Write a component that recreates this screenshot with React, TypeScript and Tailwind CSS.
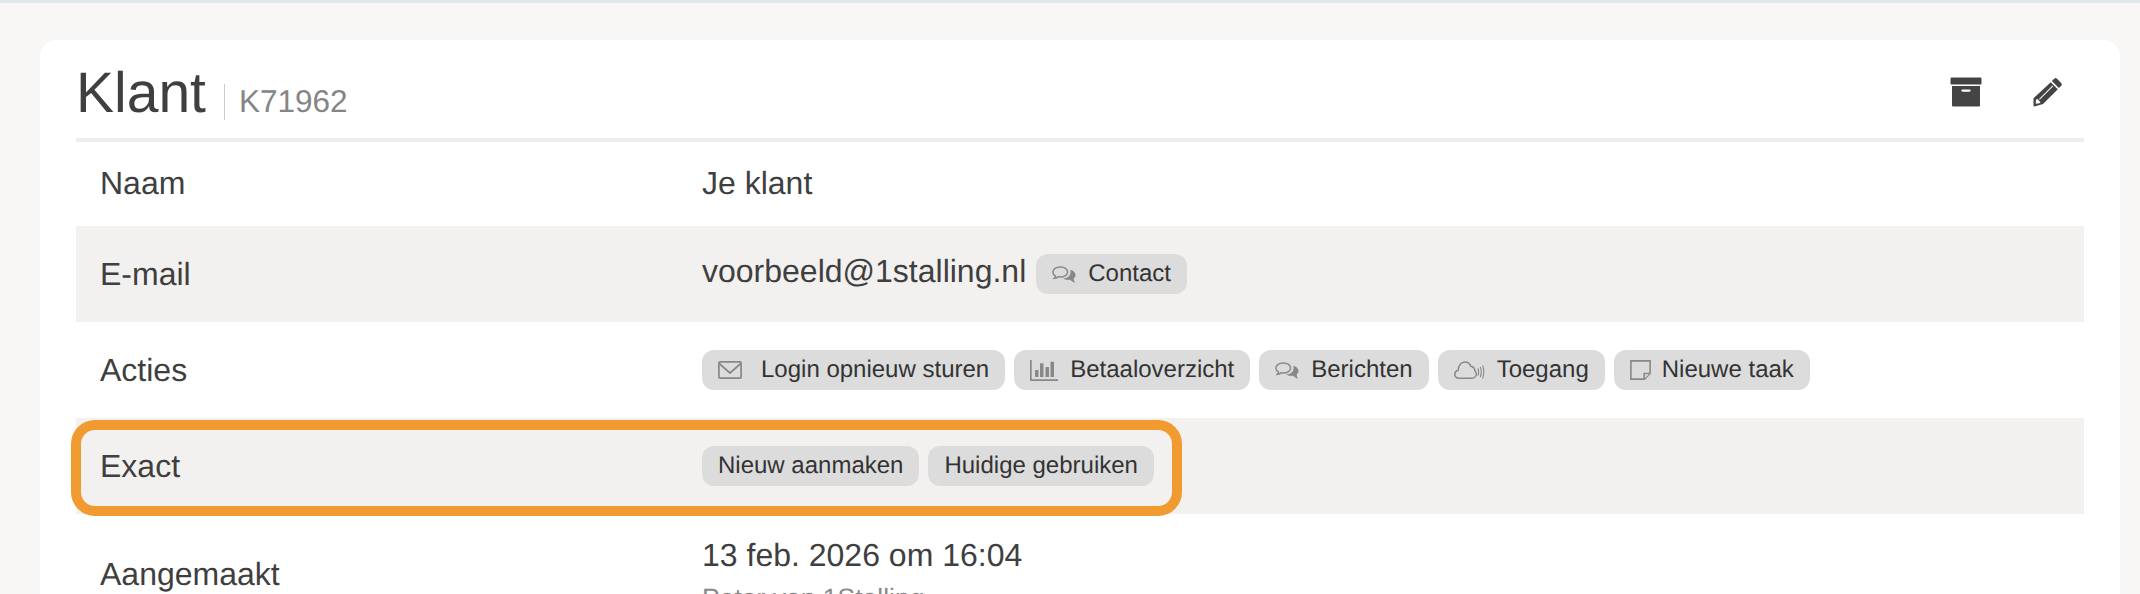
import type { ReactNode } from "react";

const ArchiveIcon = () => (
  <svg width="32" height="30" viewBox="0 0 32 30" fill="#444">
    <rect x="0.5" y="0.5" width="31" height="7" rx="1.2" />
    <path fillRule="evenodd" d="M2 9h28v19.5a1 1 0 0 1-1 1H3a1 1 0 0 1-1-1zM12.500 12.500a1 1 0 0 0 0 2.200h7a1 1 0 0 0 0-2.200z" />
  </svg>
);

const PencilIcon = () => (
  <svg width="30" height="30" viewBox="0 0 30 30" fill="#444">
    <path d="M21.200 1.800a2 2 0 0 1 2.800 0l4.200 4.200a2 2 0 0 1 0 2.800l-2.300 2.300-7-7z" />
    <path fillRule="evenodd" d="M17.800 5.200l7 7L10 27l-8.500 2.500a1 1 0 0 1-1-1v-7.300zM3 23l-.3 3.800 3.800-.6 1-1-3.400-3.400zM19.500 8.600L6 22.100l.7.700L20.200 9.300z" />
  </svg>
);

const CommentsIcon = () => (
  <svg width="24" height="17" viewBox="0 0 24 17" fill="none" stroke="#888" strokeWidth="1.500">
    <path d="M8.300.9C4.100.9.900 3.100.900 6c0 1.700 1 3.100 2.600 4.100-.1.800-.6 1.600-1.200 2.200 1.500-.1 2.800-.7 3.800-1.500.7.100 1.400.2 2.200.2 4.200 0 7.300-2.200 7.300-5S12.500.9 8.300.9z" />
    <path fill="#888" stroke="none" d="M18.200 3.800c3.200.8 5.300 2.700 5.300 5.100 0 1.400-.7 2.600-1.900 3.500.1 1.500.7 3 1.400 4.300-2-.5-3.600-1.600-4.800-2.900-.6.100-1.300.1-1.900.1-2.100 0-4-.5-5.300-1.400 4.900.2 8.900-3.300 7.200-8.700z" />
  </svg>
);

const EnvelopeIcon = () => (
  <svg width="24" height="18" viewBox="0 0 24 18" fill="none" stroke="#888" strokeWidth="1.700">
    <rect x="0.900" y="0.900" width="22.200" height="16.200" rx="1.200" />
    <path d="M1.200 2.500L12 12 22.800 2.500" />
  </svg>
);

const ChartIcon = () => (
  <svg width="28" height="21" viewBox="0 0 28 21" fill="#888">
    <path d="M0 0h1.700v19.300H28V21H0z" />
    <rect x="5" y="10" width="3.500" height="7" />
    <rect x="10" y="3.300" width="3.500" height="13.700" />
    <rect x="15.500" y="7" width="3.500" height="10" />
    <rect x="20.500" y="1.700" width="3.500" height="15.300" />
  </svg>
);

const CloudIcon = () => (
  <svg width="31" height="19" viewBox="0 0 31 19" fill="none" stroke="#888" strokeWidth="1.500">
    <path d="M4.800 17.200C2.500 17.200.8 15.500.8 13.400c0-1.900 1.400-3.500 3.300-3.800C4.300 4.700 7 .9 11 .9c2.700 0 4.900 1.700 5.800 4.300 2.400.3 4 2.300 4 4.600 1 .6 1.500 1.600 1.500 2.900 0 2.300-1.800 4.500-4.300 4.500z" />
    <path d="M24 7.500c.8 2.300.8 4.800 0 7M26.300 6c1.200 3.300 1.200 6.800 0 10M28.600 4.500c1.500 4.200 1.500 8.800 0 13" strokeWidth="1.100" />
  </svg>
);

const NoteIcon = () => (
  <svg width="21" height="20" viewBox="0 0 21 20" fill="none" stroke="#888" strokeWidth="1.600">
    <path d="M.9.900h19.200v12.600l-5.600 5.600H.9z" />
    <path fill="#dcdcdc" d="M14.200 18.800v-5.300h5.600" />
  </svg>
);

const Btn = ({ icon, gap, children }: { icon?: ReactNode; gap?: string; children: ReactNode }) => (
  <span className="flex h-10 items-center rounded-xl bg-[#dcdcdc] px-4 text-[24px] text-[#333]">
    {icon && <span className={`flex ${gap}`}>{icon}</span>}
    {children}
  </span>
);

const Row = ({ label, shaded, className, children }: { label: string; shaded?: boolean; className: string; children: ReactNode }) => (
  <div className={`flex items-center ${shaded ? "bg-[#f2f1ef]" : ""} ${className}`}>
    <div className="w-[626px] shrink-0 pl-[24px]">{label}</div>
    <div className="flex items-center">{children}</div>
  </div>
);

export default function App() {
  return (
    <div className="h-[594px] overflow-hidden bg-[#f8f7f5] font-['Liberation_Sans',Arial,sans-serif] text-[32px] text-[#3f3f3f] [text-rendering:geometricPrecision]">
      <div className="h-[3px] bg-[#dfe8ea]"></div>
      <div className="ml-10 mr-5 mt-[37px] rounded-t-2xl bg-white px-9 pb-10">
        <div className="flex h-[102px] items-start justify-between border-b-4 border-[#eeeeee]">
          <div className="flex items-start">
            <h1 className="mt-[21px] text-[57px] leading-[64px]">Klant</h1>
            <div className="ml-[18px] mt-[44px] h-9 w-px bg-[#cccccc]"></div>
            <span className="ml-[14px] mt-[41px] text-[31.5px] leading-10 text-[#858585]">K71962</span>
          </div>
          <div className="mr-[21px] mt-[37px] flex items-center gap-[51px]">
            <ArchiveIcon />
            <PencilIcon />
          </div>
        </div>

        <Row label="Naam" className="h-[84px] pb-[2px]">
          <span>Je klant</span>
        </Row>
        <Row label="E-mail" shaded className="h-[96px]">
          <span className="mb-[6px]">voorbeeld@1stalling.nl</span>
          <span className="ml-[10px]">
            <Btn gap="mr-3" icon={<CommentsIcon />}>Contact</Btn>
          </span>
        </Row>
        <Row label="Acties" className="h-[96px]">
          <div className="flex gap-[9px]">
            <Btn gap="mr-[19px]" icon={<EnvelopeIcon />}>Login opnieuw sturen</Btn>
            <Btn gap="mr-3" icon={<ChartIcon />}>Betaaloverzicht</Btn>
            <Btn gap="mr-3" icon={<CommentsIcon />}>Berichten</Btn>
            <Btn gap="mr-3" icon={<CloudIcon />}>Toegang</Btn>
            <Btn gap="mr-[11px]" icon={<NoteIcon />}>Nieuwe taak</Btn>
          </div>
        </Row>
        <div className="relative">
          <Row label="Exact" shaded className="h-[96px]">
            <div className="flex gap-[9px]">
              <Btn>Nieuw aanmaken</Btn>
              <Btn>Huidige gebruiken</Btn>
            </div>
          </Row>
          <div className="absolute left-[-5px] top-[2px] h-[96px] w-[1111px] rounded-[24px] border-[10px] border-[#f09a30]"></div>
        </div>
        <Row label="Aangemaakt" className="h-[120px]">
          <div>
            <div className="leading-[40px]">13 feb. 2026 om 16:04</div>
            <div className="mt-[7px] text-[26.5px] leading-[32px] text-[#8a8a8a]">Peter van 1Stalling</div>
          </div>
        </Row>
      </div>
    </div>
  );
}
